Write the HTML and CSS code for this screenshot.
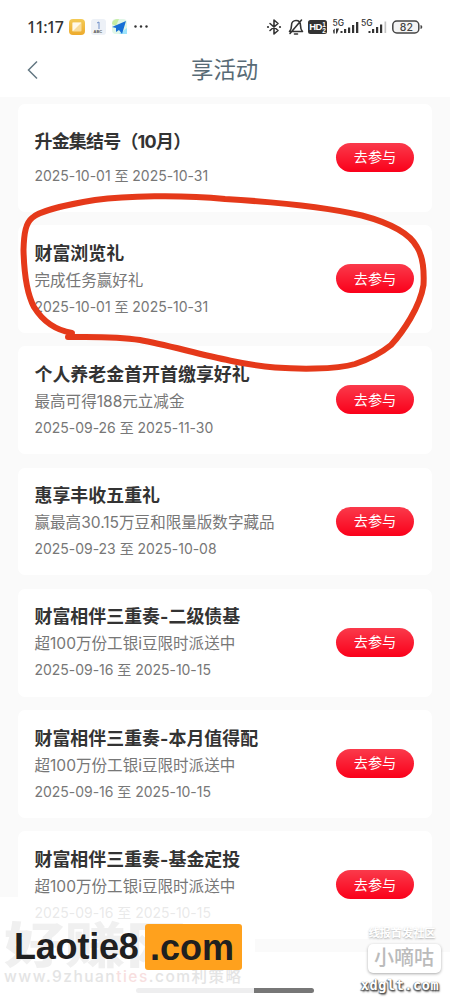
FILE: index.html
```html
<!DOCTYPE html>
<html lang="zh-CN">
<head>
<meta charset="utf-8">
<title>享活动</title>
<link rel="stylesheet" href="styles.css">
</head>
<body>
<div class="screen">
  <header class="top">
    <div class="status">
      <span class="clock">11:17</span>
      <svg class="apps" width="82" height="20" viewBox="0 0 82 20">
        <defs><linearGradient id="gold" x1="0" y1="0" x2="0" y2="1"><stop offset="0" stop-color="#f3ca55"/><stop offset="1" stop-color="#edaa2c"/></linearGradient></defs>
        <rect x="0" y="2" width="16" height="16" rx="4" fill="url(#gold)"/>
        <rect x="3.500" y="5.500" width="9" height="9" rx="1" fill="#f8dc9c"/><path d="M12.500 5.500l-9 9v-9z" fill="#fff9e8"/>
        <rect x="22" y="2" width="15" height="16" rx="3" fill="#edf1f7"/><path d="M28 6l2-1v7" fill="none" stroke="#6f8fc8" stroke-width="1"/><text x="24.500" y="15.500" class="micro">ABC</text>
        <rect x="43" y="2" width="15" height="15" rx="4" fill="#e0f6e8"/><path d="M43 7q0-5 7-5l-3 7z" fill="#c6eda2"/><path d="M50 17h8v-6z" fill="#9ee4fb"/><path d="M43 10L57 4l-4 13-3-4-3 2v-4z" fill="#176fd6"/>
        <g fill="#333"><circle cx="66.500" cy="9.500" r="1.200"/><circle cx="72" cy="9.500" r="1.200"/><circle cx="77.500" cy="9.500" r="1.200"/></g>
      </svg>
      <svg class="signals" width="158" height="20" viewBox="0 0 158 20">
        <g fill="none" stroke="#333" stroke-width="1.600" stroke-linejoin="round" stroke-linecap="round">
          <path d="M4 6.500l8 7-4 3.500V3l4 3.500-8 7"/>
          <path d="M23.500 14.500c2-2 2-4 2-6 0-3 2-5 4.500-5 3 0 4.500 2 4.500 5 0 2 0 4 2 6zM28.500 17h3M24 16.500L35.500 3"/>
        </g>
        <g fill="#333"><circle cx="2" cy="10" r="1.100"/><circle cx="14" cy="10" r="1.100"/>
          <rect x="42" y="3" width="19" height="14" rx="2.500"/>
          <path d="M67 13.500l1.700-2v5H67.500zM70 11.500h3l-2 5h-1zM74.500 14h2v2h-2zM78 12h2.200v4H78zM82 10.500h2.200V16H82zM86 8h2.200v8H86zM90 5h2.300v11H90zM102.500 14h2v2h-2zM106 12h2.200v4H106zM110 10h2.200v6H110zM114 7.500h2.200V16H114z"/>
        </g>
        <path d="M118.500 4.500h1.700V16h-1.700z" fill="#c4c4c4"/>
        <text x="43.200" y="13.300" class="hd">HD</text><text x="56.300" y="9.500" class="sim">1</text><text x="56.300" y="16" class="sim">2</text>
        <text x="66.500" y="8.500" class="net">5G</text><text x="95" y="8.500" class="net">5G</text>
        <rect x="126.800" y="4" width="26" height="12" rx="4" fill="#f4f4f4" stroke="#444" stroke-width="1.500"/><path d="M155 8.500q2 1.500 0 3z" fill="#444" stroke="#444"/>
        <text x="133.800" y="14" class="battery">82</text>
      </svg>
    </div>
    <div class="nav">
      <svg class="back" width="14" height="20" viewBox="0 0 14 20"><path d="M11 1.500L2.500 10l8.500 8.500" fill="none" stroke="#637782" stroke-width="1.500"/></svg>
      <h1>享活动</h1>
    </div>
  </header>
  <main class="list">
    <section class="card plain"><div class="info"><h2>升金集结号（10月）</h2><time>2025-10-01 至 2025-10-31</time></div><button>去参与</button></section>
    <section class="card"><div class="info"><h2>财富浏览礼</h2><p>完成任务赢好礼</p><time>2025-10-01 至 2025-10-31</time></div><button>去参与</button></section>
    <section class="card"><div class="info"><h2>个人养老金首开首缴享好礼</h2><p>最高可得188元立减金</p><time>2025-09-26 至 2025-11-30</time></div><button>去参与</button></section>
    <section class="card"><div class="info"><h2>惠享丰收五重礼</h2><p>赢最高30.15万豆和限量版数字藏品</p><time>2025-09-23 至 2025-10-08</time></div><button>去参与</button></section>
    <section class="card"><div class="info"><h2>财富相伴三重奏-二级债基</h2><p>超100万份工银i豆限时派送中</p><time>2025-09-16 至 2025-10-15</time></div><button>去参与</button></section>
    <section class="card"><div class="info"><h2>财富相伴三重奏-本月值得配</h2><p>超100万份工银i豆限时派送中</p><time>2025-09-16 至 2025-10-15</time></div><button>去参与</button></section>
    <section class="card"><div class="info"><h2>财富相伴三重奏-基金定投</h2><p>超100万份工银i豆限时派送中</p><time>2025-09-16 至 2025-10-15</time></div><button>去参与</button></section>
  </main>
  <svg class="ink" width="450" height="400" viewBox="0 0 450 400"><path d="M72 333C55 330 42 320 34 307C27 294 24 270 23.500 250C24 232 26 223 32 218C39 211 70 204 95 200C125 196 180 194.500 225 199C275 202 330 208 362 215.500C390 223 410 234 417 247C424 258 424 275 423.500 285C420 307 403 332 391 345C380 354 370 359 355 364C335 370 295 369 275 367.500C230 364 175 346 140 340C115 336 90 337 68 337"/></svg>
  <div class="ghost"><div class="ghost-name">好赚网</div><div class="ghost-url">www.9zhuan<span>ties</span>.com利策略</div></div>
  <div class="brand"><span>Laotie8</span><b>.com</b></div>
  <div class="homebar"></div>
  <div class="stamp"><span class="stamp-top">线报首发社区</span><span class="stamp-name">小嘀咕</span><span class="stamp-url">xdglt.com</span></div>
</div>
</body>
</html>
```
FILE: styles.css
```css
* { box-sizing: border-box; }
body { margin: 0; font-family: Inter, "Noto Sans CJK SC", sans-serif; background: #fff; }
.screen { position: relative; width: 450px; height: 1000px; overflow: hidden; background: #fff; }
.top { height: 97px; padding-top: 17px; }
.status { display: flex; align-items: center; height: 20px; padding-left: 27px; }
.clock { width: 42px; font: 500 16px/20px "Noto Sans", sans-serif; letter-spacing: -1px; color: #333; }
.apps { flex: none; }
.signals { margin-left: auto; margin-right: 26px; flex: none; }
.micro { font: bold 4px "Liberation Sans", sans-serif; fill: #555; }
.hd { font: bold 9.500px "Liberation Sans", sans-serif; letter-spacing: -0.6px; fill: #fff; }
.sim { font: bold 6.500px "Liberation Sans", sans-serif; fill: #fff; }
.net { font: 500 8.500px Inter, sans-serif; fill: #333; }
.battery { font: 500 10.500px Inter, sans-serif; fill: #444; }
.nav { display: flex; align-items: center; height: 66px; padding-left: 26px; }
.back { flex: none; }
h1 { margin: 0; padding-left: 151px; font-size: 22.400px; font-weight: 400; line-height: 30px; color: #586b76; }
.list { height: 855px; display: flex; flex-direction: column; gap: 13.300px; padding: 7px 18px 0; background: #fafafa; overflow: hidden; }
.card { flex: none; height: 107.900px; display: flex; justify-content: space-between; align-items: center; padding: 0 18px 0 16.500px; border-radius: 7px; background: #fff; }
.info { display: grid; grid-template-rows: 28px 26px 26px; align-items: center; white-space: nowrap; padding-top: 1.500px; }
.plain .info { grid-template-rows: 34px 34px; }
h2, p { margin: 0; }
h2 { font-size: 17.950px; line-height: 26px; font-weight: 700; color: #333; }
.plain h2 { letter-spacing: -0.75px; }
p { font-size: 15.550px; line-height: 24px; color: #777; }
time { font-size: 14px; line-height: 24px; color: #777; letter-spacing: -0.03px; }
button { width: 78px; height: 29px; margin-bottom: 1px; padding: 0 0 2px; border: 0; border-radius: 15px; background: linear-gradient(#fa3a4b, #fa001a); color: #fff; font: 400 14.200px "Noto Sans CJK SC", sans-serif; }
.ink { position: absolute; left: 0; top: 0; pointer-events: none; }
.ink path { fill: none; stroke: #e5391a; stroke-width: 6; stroke-linecap: round; stroke-linejoin: round; }
.ghost { position: absolute; left: 0; top: 897px; width: 255px; height: 90px; padding: 18px 0 0 4px; white-space: nowrap; background: rgba(255, 255, 255, .84); color: #f0f0f0; }
.ghost-name { font-size: 61px; line-height: 60px; height: 60px; font-weight: 900; transform: scaleY(.8); }
.ghost-url { font-size: 15.500px; line-height: 14px; margin-top: -5px; color: #e4e4e4; font-weight: 500; letter-spacing: 1.500px; }
.ghost-url span { color: #f8dfdf; }
.brand { position: absolute; left: 14px; top: 924px; height: 46px; display: flex; align-items: center; font: bold 36px "Liberation Sans", sans-serif; color: #202020; }
.brand span { width: 131px; letter-spacing: -0.2px; }
.brand b { width: 97px; height: 46px; padding-left: 5px; line-height: 47px; border-radius: 3px; background: #ffa11d; white-space: nowrap; }
.homebar { position: absolute; left: 136px; top: 988px; width: 178px; height: 5px; border-radius: 3px; background: linear-gradient(90deg, #eeeeef 118px, #777 118px); }
.stamp { position: absolute; left: 357px; top: 924px; width: 86px; display: flex; flex-direction: column; align-items: center; white-space: nowrap; }
.stamp-top { margin-left: 4px; font-size: 11.200px; line-height: 18px; font-weight: 700; color: #fff; text-shadow: 0 1px 2px #aaa; }
.stamp-name { width: 73px; height: 29px; margin: 2px 0 2px 8px; border-radius: 5px; background: #fff; box-shadow: 0 1px 3px #aaa; text-align: center; font-size: 20px; line-height: 28px; font-weight: 500; color: #bbb; }
.stamp-url { font: bold 13.500px/20px "DejaVu Sans Mono", monospace; color: #fff; text-shadow: 0 0 1px #555, 1px 1px 1px #555, -1px 1px 1px #777, 1px 2px 2px #777; letter-spacing: .6px; }
```
